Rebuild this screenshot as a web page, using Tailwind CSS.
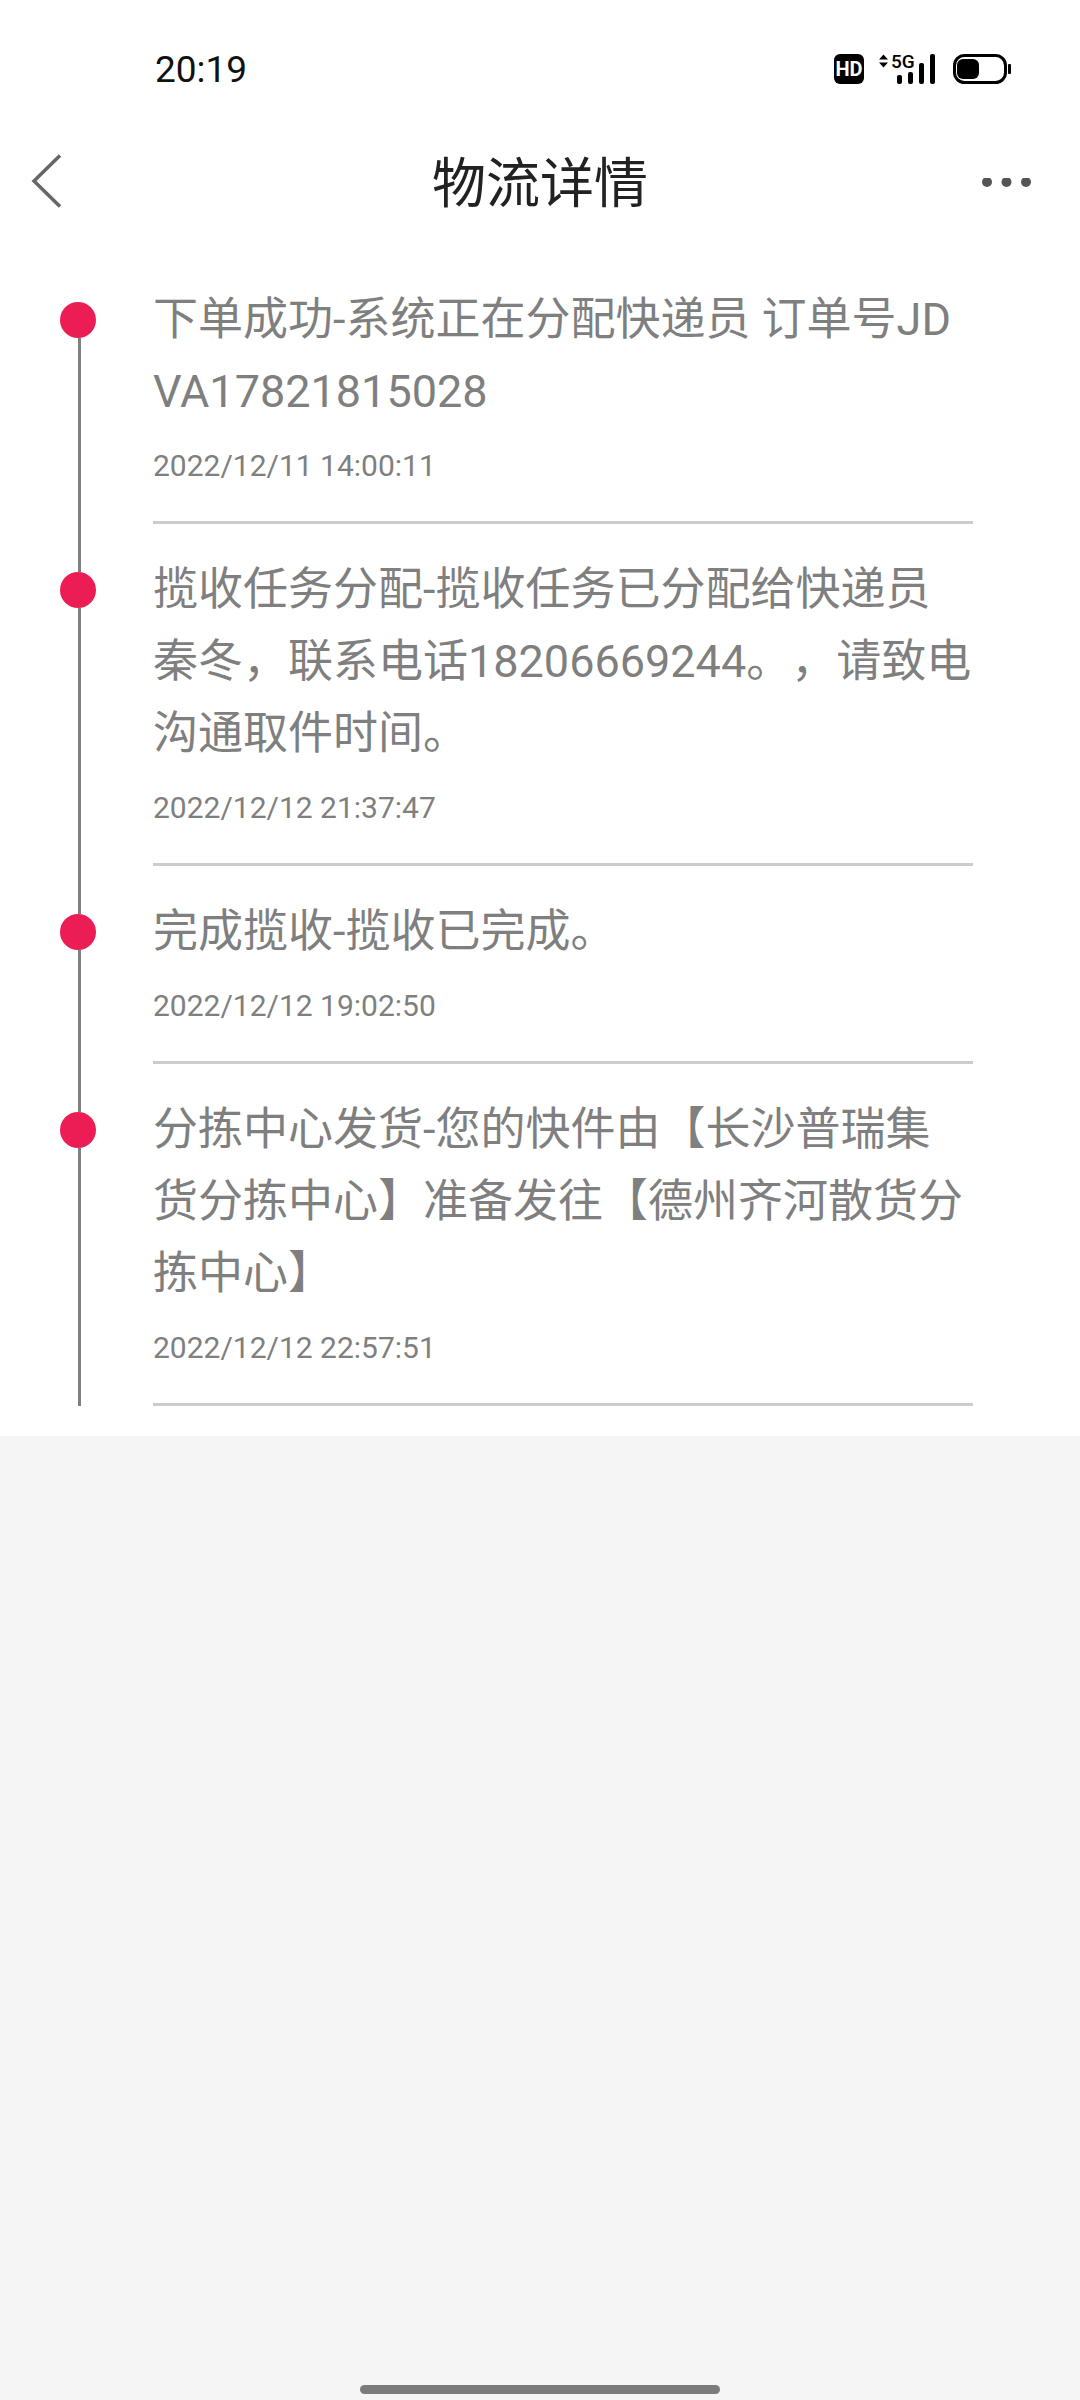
<!DOCTYPE html>
<html lang="zh-CN">
<head>
  <meta charset="UTF-8" />
  <meta name="viewport" content="width=device-width, initial-scale=1.0"/>
  <title>物流详情</title>
  <script src="https://cdn.jsdelivr.net/npm/@tailwindcss/browser@4"></script>
</head>
<body class="bg-[#f5f5f5] font-['Roboto','Noto_Sans_CJK_SC',sans-serif] [text-spacing-trim:space-all]">
  <div class="relative w-[1080px] h-[2400px] overflow-hidden">
    <div class="bg-white">
      <!-- status bar -->
      <div class="h-[138px] flex items-center justify-between pl-[155px] pr-[66px]">
        <span class="text-[37px] leading-none text-[#111]">20:19</span>
        <svg class="overflow-visible" width="180" height="30" viewBox="0 0 180 30">
          <rect x="0" y="0" width="30" height="30" rx="6" fill="#000"/>
          <text x="15" y="22" text-anchor="middle" font-family="Roboto" font-weight="700" font-size="20" fill="#fff">HD</text>
          <path d="M45 5.500l4.500-5 4.500 5zM45 8.500l4.500 5 4.500-5z" fill="#000"/>
          <text x="57" y="14" font-family="Roboto" font-weight="500" font-size="19" fill="#000">5G</text>
          <rect x="63" y="21" width="5" height="9" rx="2" fill="#000"/>
          <rect x="74" y="18" width="5" height="12" rx="2" fill="#000"/>
          <rect x="85" y="9" width="5" height="21" rx="2" fill="#000"/>
          <rect x="96" y="0" width="5" height="30" rx="2" fill="#000"/>
          <rect x="120.500" y="1.500" width="51" height="27" rx="10" fill="none" stroke="#000" stroke-width="3"/>
          <rect x="123" y="5" width="22" height="20" rx="6" fill="#000"/>
          <rect x="174" y="10" width="3" height="10" rx="1" fill="#000"/>
        </svg>
      </div>

      <!-- title bar -->
      <div class="h-[92px] flex items-center justify-between pl-[30px] pr-[48px]">
        <div class="w-[100px] -mt-[7px]">
          <svg class="block" width="32" height="56" viewBox="0 0 32 56" fill="none">
            <path d="M30 2.500L4 28l26 25.500" stroke="#666" stroke-width="3.500"/>
          </svg>
        </div>
        <h1 class="pt-[2px] text-[54px] leading-none text-[#222]">物流详情</h1>
        <div class="w-[82px] flex justify-end">
          <svg width="50" height="12" viewBox="0 0 50 12" fill="#555">
            <circle cx="5" cy="4" r="5"/>
            <circle cx="24.500" cy="4" r="5"/>
            <circle cx="44" cy="4" r="5"/>
          </svg>
        </div>
      </div>

      <!-- timeline -->
      <div class="pt-[24px] pb-[30px]">
        <div class="flex">
          <div class="w-[153px] shrink-0 pl-[60px] flex flex-col">
            <div class="h-[48px]"></div>
            <div class="w-9 h-9 rounded-full bg-[#ec1c55]"></div>
            <div class="ml-[18px] w-[3px] flex-1 bg-[#808080]"></div>
          </div>
          <div class="w-[820px] pt-[30px] border-b-[3px] border-[#cccccc]">
            <p class="text-[45px] leading-[72px] text-[#7f7f7f] break-all">下单成功-系统正在分配快递员 订单号JDVA17821815028</p>
            <p class="mt-[18px] mb-[35px] text-[30px] leading-[40px] text-[#7f7f7f]">2022/12/11 14:00:11</p>
          </div>
        </div>
        <div class="flex">
          <div class="w-[153px] shrink-0 pl-[60px] flex flex-col">
            <div class="ml-[18px] w-[3px] h-[48px] bg-[#808080]"></div>
            <div class="w-9 h-9 rounded-full bg-[#ec1c55]"></div>
            <div class="ml-[18px] w-[3px] flex-1 bg-[#808080]"></div>
          </div>
          <div class="w-[820px] pt-[30px] border-b-[3px] border-[#cccccc]">
            <p class="text-[45px] leading-[72px] text-[#7f7f7f] break-all">揽收任务分配-揽收任务已分配给快递员秦冬，联系电话18206669244。，请致电沟通取件时间。</p>
            <p class="mt-[18px] mb-[35px] text-[30px] leading-[40px] text-[#7f7f7f]">2022/12/12 21:37:47</p>
          </div>
        </div>
        <div class="flex">
          <div class="w-[153px] shrink-0 pl-[60px] flex flex-col">
            <div class="ml-[18px] w-[3px] h-[48px] bg-[#808080]"></div>
            <div class="w-9 h-9 rounded-full bg-[#ec1c55]"></div>
            <div class="ml-[18px] w-[3px] flex-1 bg-[#808080]"></div>
          </div>
          <div class="w-[820px] pt-[30px] border-b-[3px] border-[#cccccc]">
            <p class="text-[45px] leading-[72px] text-[#7f7f7f] break-all">完成揽收-揽收已完成。</p>
            <p class="mt-[18px] mb-[35px] text-[30px] leading-[40px] text-[#7f7f7f]">2022/12/12 19:02:50</p>
          </div>
        </div>
        <div class="flex">
          <div class="w-[153px] shrink-0 pl-[60px] flex flex-col">
            <div class="ml-[18px] w-[3px] h-[48px] bg-[#808080]"></div>
            <div class="w-9 h-9 rounded-full bg-[#ec1c55]"></div>
            <div class="ml-[18px] w-[3px] flex-1 bg-[#808080]"></div>
          </div>
          <div class="w-[820px] pt-[30px] border-b-[3px] border-[#cccccc]">
            <p class="text-[45px] leading-[72px] text-[#7f7f7f] break-all">分拣中心发货-您的快件由【长沙普瑞集货分拣中心】准备发往【德州齐河散货分拣中心】</p>
            <p class="mt-[18px] mb-[35px] text-[30px] leading-[40px] text-[#7f7f7f]">2022/12/12 22:57:51</p>
          </div>
        </div>
      </div>
    </div>

    <!-- gesture bar -->
    <div class="absolute bottom-[6px] left-[360px] w-[360px] h-[9px] rounded-full bg-[#7b7b7b]"></div>
  </div>
</body>
</html>
